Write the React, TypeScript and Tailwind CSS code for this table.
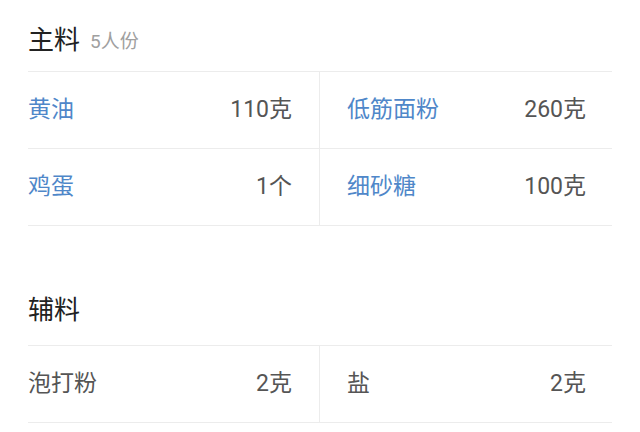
import React from "react";

type Item = { name: string; amount: string; link?: boolean };

const main: Item[] = [
  { name: "黄油", amount: "110克", link: true },
  { name: "低筋面粉", amount: "260克", link: true },
  { name: "鸡蛋", amount: "1个", link: true },
  { name: "细砂糖", amount: "100克", link: true },
];

const extra: Item[] = [
  { name: "泡打粉", amount: "2克" },
  { name: "盐", amount: "2克" },
];

function Section({ title, sub, items, head }: { title: string; sub?: string; items: Item[]; head: string }) {
  return (
    <section className="px-[28px]">
      <div className={`flex h-[71px] items-center gap-[10px] ${head}`}>
        <h2 className="text-[26px] font-normal leading-none text-[#222]">{title}</h2>
        {sub && <span className="pt-[3px] text-[19px] leading-none text-[#a0a0a0]">{sub}</span>}
      </div>
      <div className="grid grid-cols-2 border-t border-[#ececec]">
        {items.map((it, i) => (
          <div
            key={it.name}
            className={`flex h-[77px] items-center justify-between border-b border-[#ececec] ${
              i % 2 === 0 ? "border-r pr-[27px]" : "pl-[27px] pr-[26px]"
            }`}
          >
            <span className={`text-[23px] ${it.link ? "text-[#4f87c9]" : "text-[#555]"}`}>{it.name}</span>
            <span className="text-[23px] text-[#555]">{it.amount}</span>
          </div>
        ))}
      </div>
    </section>
  );
}

export default function App() {
  return (
    <div
      className="h-[432px] w-[640px] overflow-hidden bg-white"
      style={{ fontFamily: "Roboto, 'Noto Sans CJK SC', sans-serif" }}
    >
      <Section title="主料" sub="5人份" items={main} head="pt-[9px]" />
      <div className="h-[48px]" />
      <Section title="辅料" items={extra} head="pt-[1px]" />
    </div>
  );
}
